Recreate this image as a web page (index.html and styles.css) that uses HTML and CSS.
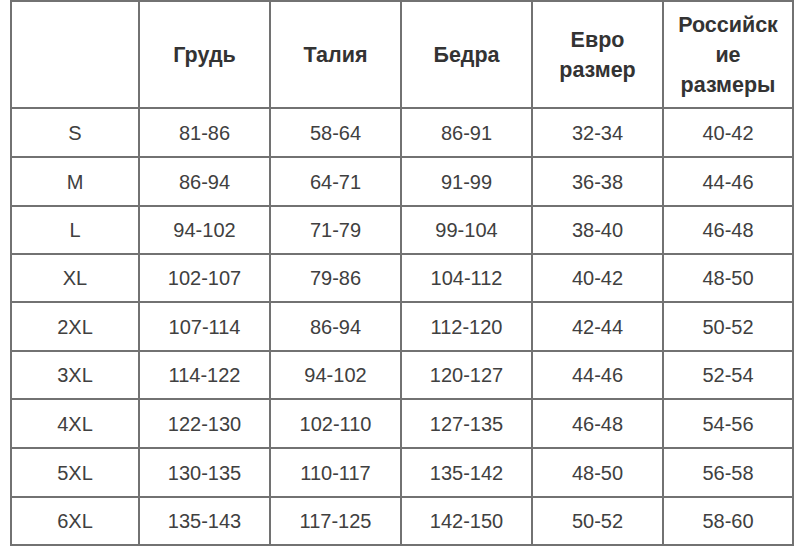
FILE: index.html
```html
<!DOCTYPE html>
<html lang="ru">
<head>
<meta charset="utf-8">
<title>Таблица размеров</title>
<link rel="stylesheet" href="styles.css">
</head>
<body>
<div class="size-table">
  <div class="cell head"></div>
  <div class="cell head">Грудь</div>
  <div class="cell head">Талия</div>
  <div class="cell head">Бедра</div>
  <div class="cell head">Евро<br>размер</div>
  <div class="cell head">Российск<br>ие<br>размеры</div>

  <div class="cell">S</div><div class="cell">81-86</div><div class="cell">58-64</div><div class="cell">86-91</div><div class="cell">32-34</div><div class="cell">40-42</div>
  <div class="cell">M</div><div class="cell">86-94</div><div class="cell">64-71</div><div class="cell">91-99</div><div class="cell">36-38</div><div class="cell">44-46</div>
  <div class="cell">L</div><div class="cell">94-102</div><div class="cell">71-79</div><div class="cell">99-104</div><div class="cell">38-40</div><div class="cell">46-48</div>
  <div class="cell">XL</div><div class="cell">102-107</div><div class="cell">79-86</div><div class="cell">104-112</div><div class="cell">40-42</div><div class="cell">48-50</div>
  <div class="cell">2XL</div><div class="cell">107-114</div><div class="cell">86-94</div><div class="cell">112-120</div><div class="cell">42-44</div><div class="cell">50-52</div>
  <div class="cell">3XL</div><div class="cell">114-122</div><div class="cell">94-102</div><div class="cell">120-127</div><div class="cell">44-46</div><div class="cell">52-54</div>
  <div class="cell">4XL</div><div class="cell">122-130</div><div class="cell">102-110</div><div class="cell">127-135</div><div class="cell">46-48</div><div class="cell">54-56</div>
  <div class="cell">5XL</div><div class="cell">130-135</div><div class="cell">110-117</div><div class="cell">135-142</div><div class="cell">48-50</div><div class="cell">56-58</div>
  <div class="cell">6XL</div><div class="cell">135-143</div><div class="cell">117-125</div><div class="cell">142-150</div><div class="cell">50-52</div><div class="cell">58-60</div>
</div>
</body>
</html>
```

FILE: styles.css
```css
html, body {
  margin: 0;
  padding: 0;
  background: #ffffff;
}

body {
  font-family: "Liberation Sans", Arial, sans-serif;
  color: #3c3c3c;
}

.size-table {
  margin-left: 10px;
  width: max-content;
  display: grid;
  grid-template-columns: 126px 129px 129px 129px 129px 128px;
  grid-template-rows: 105px 47px 47px 46px 46px 47px 46px 47px 47px 46px;
  gap: 2px;
  padding: 2px;
  background: #727272;
}

.cell {
  background: #ffffff;
  display: flex;
  align-items: center;
  justify-content: center;
  text-align: center;
  font-size: 20px;
  line-height: 24px;
  color: #404040;
}

.head {
  font-weight: bold;
  font-size: 21.5px;
  line-height: 30px;
  color: #333333;
}
```
